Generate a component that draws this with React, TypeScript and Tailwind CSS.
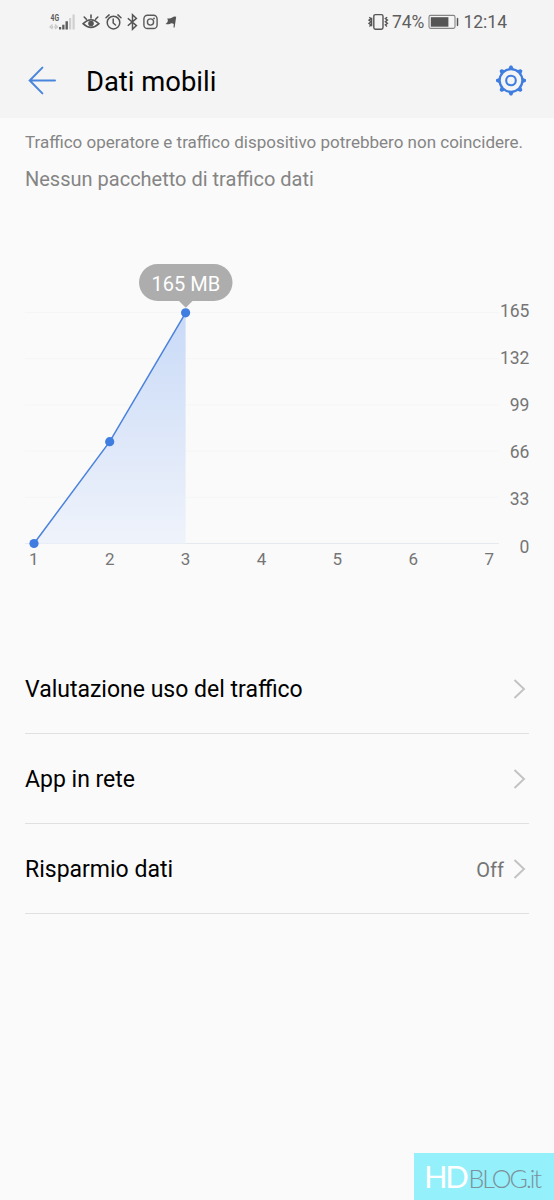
const BLUE = '#3f7de0';

const days = [1, 2, 3, 4, 5, 6, 7];
const scale = [165, 132, 99, 66, 33, 0];
const usage = [
    { x: 34, y: 543.5 },
    { x: 109.7, y: 441.7 },
    { x: 185.6, y: 312.8 },
];

const menu = [
    { label: 'Valutazione uso del traffico' },
    { label: 'App in rete' },
    { label: 'Risparmio dati', value: 'Off' },
];

const SignalIcon = () => (
    <svg width="28" height="20" viewBox="0 0 28 20" className="shrink-0">
        <text x="1.5" y="8.7" fontSize="9" fontWeight="700" fill="#5c5c5c" textLength="8.5" lengthAdjust="spacingAndGlyphs">4G</text>
        <path d="M3.5 12.5L1 15l2.5 2M6 12.5L8.5 15L6 17M3.5 14v2M6 14v2" stroke="#c9c9c9" strokeWidth="1.3" fill="none" />
        <path d="M10 15h2.2v2.5H10zM13.2 12.8h2.3v4.7h-2.3zM16.5 9.3h2.4v8.2h-2.4z" fill="#5c5c5c" />
        <path d="M20 6h2.2v11.5H20zM23.5 2.5h2.2v15h-2.2z" fill="#cfcfcf" />
    </svg>
);

const EyeIcon = () => (
    <svg width="18" height="18" viewBox="0 0 18 18" fill="none" stroke="#555" strokeWidth="1.6" strokeLinecap="round" className="shrink-0">
        <path d="M1 10.7Q9 2.8 17 10.7Q9 18.2 1 10.7z" />
        <circle cx="9" cy="10.5" r="2.8" fill="#555" stroke="none" />
        <path d="M9 5V2M4.4 6.2L2.2 4M13.6 6.2L15.8 4" />
    </svg>
);

const AlarmIcon = () => (
    <svg width="17" height="18" viewBox="0 0 17 18" fill="none" stroke="#555" strokeWidth="1.5" strokeLinecap="round" className="shrink-0">
        <circle cx="8.5" cy="9.6" r="6.3" />
        <path d="M8.2 6v4l2.3 2M1 4.8l3.1-2.9M16 4.8l-3.1-2.9" />
    </svg>
);

const BluetoothIcon = () => (
    <svg width="11" height="18" viewBox="0 0 11 18" fill="none" stroke="#555" strokeWidth="1.5" className="shrink-0">
        <path d="M.8 5.2l8.6 7.4-3.9 3.6V1.8l3.9 3.6-8.6 7.4" />
    </svg>
);

const InstagramIcon = () => (
    <svg width="15" height="18" viewBox="0 0 15 18" fill="none" stroke="#5a5a5a" strokeWidth="1.4" className="shrink-0">
        <rect x="0.9" y="2.3" width="13.2" height="13.2" rx="3.6" />
        <circle cx="7.5" cy="9" r="3.1" />
        <circle cx="11" cy="5.4" r="0.9" fill="#5a5a5a" stroke="none" />
    </svg>
);

const FlagIcon = () => (
    <svg width="12" height="18" viewBox="0 0 12 18" fill="#555" className="shrink-0">
        <path d="M2.4 5.2Q5 6 7.2 4.4Q9.1 3.1 11.2 3.8L9.6 14.5H8.5L8.8 11Q6.8 9.8 4.6 10.9Q2.6 11.8.6 10.9Q2.6 9.8 2.9 8z" />
    </svg>
);

const VibrateIcon = () => (
    <svg width="21" height="18" viewBox="0 0 21 18" fill="none" stroke="#555" strokeWidth="1.4" className="shrink-0">
        <rect x="5.8" y="1.6" width="9.2" height="14.6" rx="1.6" />
        <path d="M1.2 4.2l1.8 1.3-2 1.6 2 1.6-2 1.6 2 1.6-1.6 1.5M3.6 4.8v8.4M19.2 4.2l-1.8 1.3 2 1.6-2 1.6 2 1.6-2 1.6 1.6 1.5" />
    </svg>
);

const BatteryIcon = () => (
    <svg width="31" height="16" viewBox="0 0 31 16" className="shrink-0">
        <rect x="1" y="1.4" width="26" height="13" rx="1.6" fill="none" stroke="#858585" strokeWidth="1.1" />
        <rect x="2.8" y="3.2" width="17.6" height="9.5" fill="#555" />
        <path d="M29 4.2h1v7.5h-1z" fill="#555" stroke="#555" strokeWidth="0.5" />
    </svg>
);

const BackIcon = () => (
    <svg width="29" height="29" viewBox="0 0 29 29" fill="none" stroke="#4a85dd" strokeWidth="2" strokeLinecap="round" className="mb-0.5 shrink-0">
        <path d="M14.4 1.6L1.7 14.5l12.7 12.9M1.7 14.5H27" />
    </svg>
);

const GearIcon = () => (
    <svg width="32" height="32" viewBox="0 0 32 32" fill="none" stroke={BLUE} className="shrink-0">
        <circle cx="16" cy="15.5" r="11.4" strokeWidth="2.3" />
        <circle cx="16" cy="15.5" r="4.8" strokeWidth="2.1" />
        {[0, 45, 90, 135, 180, 225, 270, 315].map((angle) => (
            <path key={angle} d="M14.6 3.5L15.4 1.5h1.2L17.4 3.5z" fill={BLUE} strokeWidth="2" strokeLinejoin="round" transform={`rotate(${angle} 16 15.5)`} />
        ))}
    </svg>
);

const UsageChart = () => (
    <svg width="554" height="330" viewBox="0 250 554 330" fontSize="17" fill="#757575" className="block">
        <defs>
            <linearGradient id="usage" x1="0" y1="0" x2="0" y2="1">
                <stop offset="0" stopColor="#c9daf7" />
                <stop offset="1" stopColor="#eff3fb" />
            </linearGradient>
        </defs>
        {scale.map((value, i) => (
            <g key={value}>
                <path d={`M25 ${312.5 + i * 46.2}H499`} stroke={value ? '#f3f5f7' : '#e4eaf0'} strokeWidth="1" />
                <text x="529.4" y={317 + i * 47.1} textAnchor="end" fontSize="17.5">{value}</text>
            </g>
        ))}
        <path d="M34 543.5L109.7 441.7L185.6 312.8V543.5z" fill="url(#usage)" />
        <path d="M34 543.5L109.7 441.7L185.6 312.8" fill="none" stroke="#4a82dc" strokeWidth="1.5" />
        {usage.map((p) => (
            <circle key={p.x} cx={p.x} cy={p.y} r="4.6" fill={BLUE} />
        ))}
        {days.map((day, i) => (
            <text key={day} x={33.8 + i * 75.9} y="565" textAnchor="middle">{day}</text>
        ))}
        <rect x="139" y="264" width="93.5" height="37" rx="18.5" fill="#adadad" />
        <path d="M178.5 300.5h14.5l-7.2 7.3z" fill="#adadad" />
        <text x="185.8" y="290.5" textAnchor="middle" fontSize="20" fill="#fff">165 MB</text>
    </svg>
);

const Chevron = () => (
    <svg width="14" height="22" viewBox="0 0 14 22" fill="none" stroke="#c2c2c2" strokeWidth="1.9" className="ml-[9px] mr-0.5 shrink-0">
        <path d="M1.5 2l9.5 9-9.5 9" />
    </svg>
);

const App = () => {
    return (
        <div className="flex h-[1200px] w-[554px] flex-col overflow-hidden bg-[#fafafa] font-['Roboto',sans-serif] text-black">
            <div className="h-[118px] bg-[#f4f4f4]">
                <div className="flex h-11 items-center justify-between pl-[49px] pr-[47px] text-[#5e5e5e]">
                    <div className="flex items-center">
                        <SignalIcon />
                        <div className="ml-[5px] flex items-center gap-[5px]">
                            <EyeIcon />
                            <AlarmIcon />
                            <BluetoothIcon />
                            <InstagramIcon />
                            <div className="ml-0.5">
                                <FlagIcon />
                            </div>
                        </div>
                    </div>
                    <div className="flex items-center text-[17.5px] leading-none">
                        <VibrateIcon />
                        <span className="ml-[3px] mr-1 pt-0.5">74%</span>
                        <BatteryIcon />
                        <span className="ml-1 pt-0.5">12:14</span>
                    </div>
                </div>
                <div className="flex h-[74px] items-center pl-[28px] pr-[27px]">
                    <BackIcon />
                    <h1 className="ml-[29px] flex-1 pt-0.5 text-[27.4px] leading-8">Dati mobili</h1>
                    <GearIcon />
                </div>
            </div>

            <div className="h-[132px] whitespace-nowrap px-[25px] pt-[13px] text-[#858585]">
                <p className="text-[17px] leading-[22px]">Traffico operatore e traffico dispositivo potrebbero non coincidere.</p>
                <p className="mt-3 text-[20px] leading-7">Nessun pacchetto di traffico dati</p>
            </div>

            <UsageChart />

            <div className="mx-[25px] mt-[64px] flex-1">
                {menu.map((item) => (
                    <div key={item.label} className="flex h-[90px] items-center border-b border-[#e0e0e0]">
                        <span className="flex-1 pt-1 text-[23px]">{item.label}</span>
                        {item.value && <span className="pt-0.5 text-[20px] text-[#757575]">{item.value}</span>}
                        <Chevron />
                    </div>
                ))}
            </div>

            <div className="flex h-[47px] w-[140px] items-baseline self-end whitespace-nowrap bg-[#94f0fa] pl-2.5 pt-[5px] font-['Lato',sans-serif] leading-9">
                <span className="text-[31px] tracking-[-2.4px] text-white">HD</span>
                <span className="ml-0.5 text-[25px] font-light tracking-[-2px] text-[#7b919b]">BLOG.it</span>
            </div>
        </div>
    );
};

export default App;
